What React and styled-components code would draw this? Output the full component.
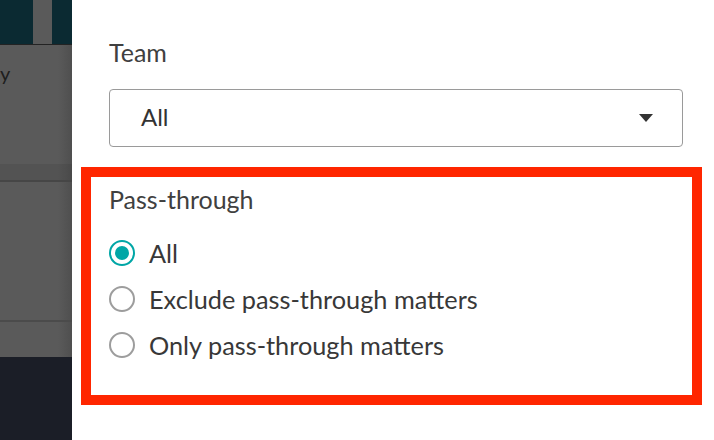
import React from "react";
import styled, { createGlobalStyle } from "styled-components";

const Global = createGlobalStyle`
  html, body { margin: 0; padding: 0; background: #fff; }
  body { font-family: Lato, "Open Sans", sans-serif; }
  * { box-sizing: border-box; }
`;

const Page = styled.div`
  display: flex;
  width: 714px;
  height: 440px;
  overflow: hidden;
`;

const Backdrop = styled.div`
  width: 72px;
  flex: none;
  display: flex;
  flex-direction: column;
`;

const TopBar = styled.div`
  height: 45px;
  background: #0b2a32;
  display: flex;
  padding-left: 33px;
  border-bottom: 1px solid #232323;
  flex: none;
`;

const TabStub = styled.div`
  width: 19px;
  background: #5a5a5a;
`;

const Dimmed = styled.div`
  flex: 1;
  display: flex;
  flex-direction: column;
  background: linear-gradient(to right, #5a5a5a 0, #5a5a5a 58px, #4f4f4f 72px);
`;

const HeaderCell = styled.div`
  height: 119px;
  padding-top: 16px;
  font-size: 20px;
  color: #1e1e1e;
  line-height: 24px;
  flex: none;
`;

const BandRow = styled.div`
  height: 18px;
  background: rgba(0, 0, 0, 0.07);
  border-bottom: 2px solid #464646;
  flex: none;
`;

const BodyRow = styled.div`
  height: 140px;
  border-bottom: 2px solid #4b4b4b;
  flex: none;
`;

const FooterRow = styled.div`
  flex: 1;
`;

const BottomBar = styled.div`
  height: 83px;
  background: #1b1e27;
  flex: none;
`;

const Drawer = styled.div`
  flex: 1;
  background: #fff;
  padding: 37px 12px 0 9px;
  display: flex;
  flex-direction: column;
`;

const Field = styled.div`
  padding: 0 19px 0 28px;
  display: flex;
  flex-direction: column;
`;

const Label = styled.div`
  font-size: 25px;
  line-height: 30px;
  color: #404040;
`;

const Select = styled.div`
  margin-top: 22px;
  height: 58px;
  border: 1.5px solid #9a9a9a;
  border-radius: 4px;
  display: flex;
  align-items: center;
  justify-content: space-between;
  padding: 0 29px 4px 31px;
  font-size: 24px;
  color: #333;
`;

const Caret = styled.span`
  width: 0;
  height: 0;
  border-left: 7px solid transparent;
  border-right: 7px solid transparent;
  border-top: 8px solid #333;
  margin-top: 4px;
`;

const Highlight = styled.div`
  margin-top: 20px;
  border: 10px solid #ff2600;
  padding: 7px 0 27px 18px;
  display: flex;
  flex-direction: column;
`;

const RadioGroup = styled.div`
  margin-top: 16px;
  display: flex;
  flex-direction: column;
`;

const Option = styled.label`
  height: 46px;
  display: flex;
  align-items: center;
  gap: 14px;
  font-size: 25.3px;
  color: #383838;
`;

const Dot = styled.span`
  width: 26px;
  height: 26px;
  border-radius: 50%;
  border: 2px solid ${(p) => (p.$checked ? "#00a6a6" : "#9d9d9d")};
  display: flex;
  align-items: center;
  justify-content: center;
  flex: none;
  &::after {
    content: "";
    width: 14px;
    height: 14px;
    border-radius: 50%;
    background: ${(p) => (p.$checked ? "#00a6a6" : "transparent")};
  }
`;

const options = ["All", "Exclude pass-through matters", "Only pass-through matters"];

export default function App() {
  return (
    <Page>
      <Global />
      <Backdrop>
        <TopBar>
          <TabStub />
        </TopBar>
        <Dimmed>
          <HeaderCell>y</HeaderCell>
          <BandRow />
          <BodyRow />
          <FooterRow />
        </Dimmed>
        <BottomBar />
      </Backdrop>
      <Drawer>
        <Field>
          <Label>Team</Label>
          <Select>
            <span>All</span>
            <Caret />
          </Select>
        </Field>
        <Highlight>
          <Label>Pass-through</Label>
          <RadioGroup>
            {options.map((o, i) => (
              <Option key={o}>
                <Dot $checked={i === 0} />
                {o}
              </Option>
            ))}
          </RadioGroup>
        </Highlight>
      </Drawer>
    </Page>
  );
}
